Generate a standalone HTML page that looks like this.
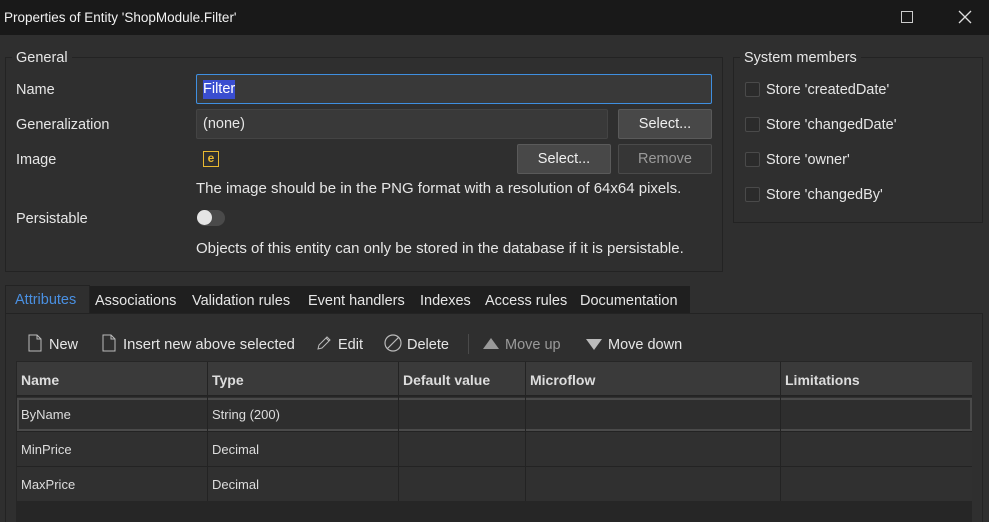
<!DOCTYPE html>
<html><head><style>
*{margin:0;padding:0;box-sizing:border-box}
body{width:989px;height:522px;background:#2f2f2f;font-family:"Liberation Sans",sans-serif;font-size:14.5px;color:#e6e6e6;position:relative;overflow:hidden}
.a{position:absolute;white-space:nowrap}
.box{position:absolute;border:1px solid #232323}
.btn{position:absolute;background:#484848;border:1px solid #5a5a5a;border-radius:2px;text-align:center;line-height:28px;color:#f0f0f0}
.inp{position:absolute;background:#393939;border:1px solid #444;border-radius:2px;line-height:28px;padding-left:6px}
.cb{position:absolute;width:15px;height:15px;border:1px solid #4a4a4a;border-radius:2px;background:#2b2b2b}
.hd{position:absolute;top:362px;height:34px;line-height:36px;font-weight:bold;color:#ddd;font-size:14px}
.c{position:absolute;line-height:36px;font-size:13px;color:#ddd}
.vl{position:absolute;width:1px;background:#232323}
.t{font-size:15px}
</style></head><body>
<div class="a" style="left:0;top:0;width:989px;height:35px;background:#191919"></div>
<div class="a" style="left:4px;top:10px;font-size:13.5px;color:#f2f2f2">Properties of Entity 'ShopModule.Filter'</div>
<div class="a" style="left:901px;top:11px;width:12px;height:12px;border:1px solid #ccc"></div>
<svg class="a" style="left:958px;top:10px" width="14" height="14"><path d="M1 1L13 13M13 1L1 13" stroke="#ddd" stroke-width="1.3"/></svg>

<div class="box" style="left:5px;top:57px;width:718px;height:215px"></div>
<div class="a" style="left:12px;top:50px;background:#2f2f2f;padding:0 4px">General</div>
<div class="a" style="left:16px;top:82px">Name</div>
<div class="inp" style="left:196px;top:74px;width:516px;height:30px;border-color:#3f8fe0"><span style="background:#3a4ed0;color:#fff;line-height:19px;display:inline-block">Filter</span></div>
<div class="a" style="left:16px;top:117px">Generalization</div>
<div class="inp" style="left:196px;top:109px;width:412px;height:30px">(none)</div>
<div class="btn" style="left:618px;top:109px;width:94px;height:30px">Select...</div>
<div class="a" style="left:16px;top:152px">Image</div>
<div class="a" style="left:203px;top:151px;width:16px;height:16px;border:1.5px solid #e8b830;color:#e8b830;font-size:12px;line-height:13px;text-align:center;font-weight:bold">e</div>
<div class="btn" style="left:517px;top:144px;width:94px;height:30px">Select...</div>
<div class="btn" style="left:618px;top:144px;width:94px;height:30px;background:#363636;border-color:#4a4a4a;color:#9a9a9a">Remove</div>
<div class="a t" style="left:196px;top:180px">The image should be in the PNG format with a resolution of 64x64 pixels.</div>
<div class="a" style="left:16px;top:211px">Persistable</div>
<div class="a" style="left:197px;top:210px;width:28px;height:16px;border-radius:8px;background:#4a4a4a"></div>
<div class="a" style="left:197px;top:210px;width:15px;height:15px;border-radius:50%;background:#e4e4e4"></div>
<div class="a t" style="left:196px;top:240px">Objects of this entity can only be stored in the database if it is persistable.</div>

<div class="box" style="left:733px;top:57px;width:250px;height:166px"></div>
<div class="a" style="left:740px;top:50px;background:#2f2f2f;padding:0 4px">System members</div>
<div class="cb" style="left:745px;top:82px"></div><div class="a" style="left:766px;top:82px">Store 'createdDate'</div>
<div class="cb" style="left:745px;top:117px"></div><div class="a" style="left:766px;top:117px">Store 'changedDate'</div>
<div class="cb" style="left:745px;top:152px"></div><div class="a" style="left:766px;top:152px">Store 'owner'</div>
<div class="cb" style="left:745px;top:187px"></div><div class="a" style="left:766px;top:187px">Store 'changedBy'</div>

<div class="a" style="left:89px;top:286px;width:601px;height:27px;background:#1f1f1f"></div>
<div class="a" style="left:5px;top:285px;width:85px;height:29px;background:#2f2f2f;border:1px solid #232323;border-bottom:none"></div>
<div class="a" style="left:15px;top:292px;color:#4a90e2">Attributes</div>
<div class="a" style="left:95px;top:293px">Associations</div>
<div class="a" style="left:192px;top:293px">Validation rules</div>
<div class="a" style="left:308px;top:293px">Event handlers</div>
<div class="a" style="left:420px;top:293px">Indexes</div>
<div class="a" style="left:485px;top:293px">Access rules</div>
<div class="a" style="left:580px;top:293px">Documentation</div>
<div class="a" style="left:5px;top:313px;width:978px;height:1px;background:#232323"></div>
<div class="a" style="left:5px;top:313px;width:1px;height:209px;background:#232323"></div>
<div class="a" style="left:982px;top:313px;width:1px;height:209px;background:#232323"></div>

<svg class="a" style="left:28px;top:334px" width="14" height="18"><path d="M1 1H9L13 5V17H1Z M9 1V5H13" fill="none" stroke="#bbb" stroke-width="1"/></svg>
<div class="a" style="left:49px;top:337px">New</div>
<svg class="a" style="left:102px;top:334px" width="14" height="18"><path d="M1 1H9L13 5V17H1Z M9 1V5H13" fill="none" stroke="#bbb" stroke-width="1"/></svg>
<div class="a" style="left:123px;top:337px;font-size:14.8px">Insert new above selected</div>
<svg class="a" style="left:316px;top:335px" width="16" height="16"><path d="M2 14L3 10L11 2L14 5L6 13Z M10 3L13 6" fill="none" stroke="#bbb" stroke-width="1"/></svg>
<div class="a" style="left:338px;top:337px">Edit</div>
<svg class="a" style="left:384px;top:334px" width="18" height="18"><circle cx="9" cy="9" r="8" fill="none" stroke="#bbb" stroke-width="1.2"/><path d="M3.5 14.5L14.5 3.5" stroke="#bbb" stroke-width="1.2"/></svg>
<div class="a" style="left:407px;top:337px">Delete</div>
<div class="a" style="left:468px;top:334px;width:1px;height:20px;background:#4a4a4a"></div>
<svg class="a" style="left:483px;top:337px" width="16" height="13"><path d="M0 12L8 1L16 12Z" fill="#9a9a9a"/></svg>
<div class="a" style="left:505px;top:337px;color:#9a9a9a">Move up</div>
<svg class="a" style="left:586px;top:338px" width="16" height="13"><path d="M0 1L8 12L16 1Z" fill="#bbb"/></svg>
<div class="a" style="left:608px;top:337px">Move down</div>

<div class="a" style="left:16px;top:361px;width:956px;height:161px;background:#262626"></div>
<div class="a" style="left:17px;top:362px;width:955px;height:34px;background:#3a3a3a;border-bottom:1px solid #232323"></div>
<div class="a" style="left:17px;top:397px;width:955px;height:104px;background:#303030"></div>
<div class="a" style="left:17px;top:431px;width:955px;height:1px;background:#232323"></div>
<div class="a" style="left:17px;top:466px;width:955px;height:1px;background:#232323"></div>
<div class="a" style="left:17px;top:398px;width:955px;height:33px;border:2px solid #4a4a4a;background:#2e2e2e"></div>
<div class="vl" style="left:207px;top:362px;height:139px"></div>
<div class="vl" style="left:398px;top:362px;height:139px"></div>
<div class="vl" style="left:525px;top:362px;height:139px"></div>
<div class="vl" style="left:780px;top:362px;height:139px"></div>
<div class="hd" style="left:21px">Name</div>
<div class="hd" style="left:212px">Type</div>
<div class="hd" style="left:403px">Default value</div>
<div class="hd" style="left:530px">Microflow</div>
<div class="hd" style="left:785px">Limitations</div>
<div class="c" style="left:21px;top:397px">ByName</div><div class="c" style="left:212px;top:397px">String (200)</div>
<div class="c" style="left:21px;top:432px">MinPrice</div><div class="c" style="left:212px;top:432px">Decimal</div>
<div class="c" style="left:21px;top:467px">MaxPrice</div><div class="c" style="left:212px;top:467px">Decimal</div>
</body></html>
